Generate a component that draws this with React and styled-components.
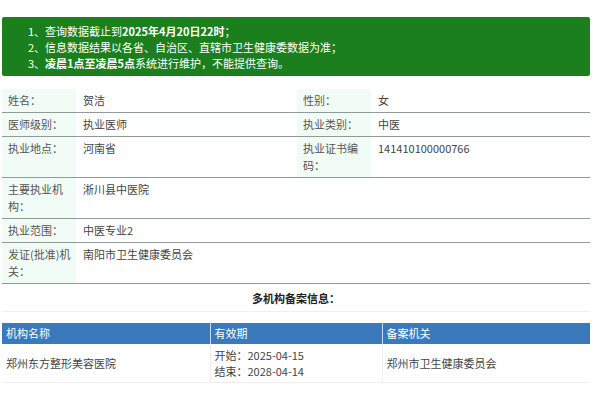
import React from "react";
import styled, { createGlobalStyle } from "styled-components";

const GlobalStyle = createGlobalStyle`
  body {
    margin: 0;
    background: #fff;
    font-family: "Noto Sans CJK SC", "Noto Sans", sans-serif;
    font-size: 11px;
    color: #333;
  }
`;

const Page = styled.div`
  width: 588px;
  margin-left: 2px;
  padding-top: 17px;
`;

const Notice = styled.ul`
  list-style: none;
  margin: 0;
  padding: 6px 0 5px 26px;
  background: #1b7f1e;
  border-radius: 2px;
  color: #fff;
  line-height: 16px;
`;

const NoticeItem = styled.li`
  b {
    font-weight: 700;
  }
`;

const Detail = styled.table`
  width: 100%;
  margin-top: 13px;
  border-collapse: collapse;
  table-layout: fixed;
`;

const Row = styled.tr`
  border-bottom: 1px solid #8e9c97;
`;

const Label = styled.td`
  background: #f2fcf6;
  color: #555;
  padding: 3px 2px 3px 6px;
  line-height: 17px;
  vertical-align: top;
`;

const Value = styled.td`
  color: #444;
  padding: 3px 7px;
  line-height: 17px;
  vertical-align: top;
`;

const SubTitle = styled.div`
  margin-top: 6px;
  padding-bottom: 5px;
  border-bottom: 1px solid #f0f0f0;
  text-align: center;
  font-weight: 700;
  color: #222;
  line-height: 16px;
`;

const Records = styled.table`
  width: 100%;
  margin-top: 11px;
  border-collapse: collapse;
  table-layout: fixed;
`;

const Head = styled.th`
  background: #3a79bb;
  color: #fff;
  font-weight: 400;
  text-align: left;
  padding: 2px 4px;
  line-height: 17px;
  border-left: ${(p) => (p.$first ? "none" : "1px solid #c9dbee")};
`;

const Cell = styled.td`
  color: #444;
  padding: 3px 4px;
  line-height: 16px;
  border-left: ${(p) => (p.$first ? "none" : "1px solid #eee")};
  border-bottom: 1px solid #eee;
`;

const details = [
  [["姓名：", "贺洁"], ["性别：", "女"]],
  [["医师级别：", "执业医师"], ["执业类别：", "中医"]],
  [["执业地点：", "河南省"], ["执业证书编码：", "141410100000766"]],
  [["主要执业机构：", "淅川县中医院"]],
  [["执业范围：", "中医专业2"]],
  [["发证(批准)机关：", "南阳市卫生健康委员会"]],
];

export default function App() {
  return (
    <Page>
      <GlobalStyle />
      <Notice>
        <NoticeItem>
          1、查询数据截止到<b>2025年4月20日22时</b>；
        </NoticeItem>
        <NoticeItem>2、信息数据结果以各省、自治区、直辖市卫生健康委数据为准；</NoticeItem>
        <NoticeItem>
          3、<b>凌晨1点至凌晨5点</b>系统进行维护，不能提供查询。
        </NoticeItem>
      </Notice>

      <Detail>
        <colgroup>
          <col style={{ width: 74 }} />
          <col style={{ width: 221 }} />
          <col style={{ width: 74 }} />
          <col />
        </colgroup>
        <tbody>
          {details.map((row, i) => (
            <Row key={i}>
              {row.map(([label, value], j) => (
                <React.Fragment key={j}>
                  <Label>{label}</Label>
                  <Value colSpan={row.length === 1 ? 3 : 1}>{value}</Value>
                </React.Fragment>
              ))}
            </Row>
          ))}
        </tbody>
      </Detail>

      <SubTitle>多机构备案信息：</SubTitle>

      <Records>
        <colgroup>
          <col style={{ width: 208 }} />
          <col style={{ width: 172 }} />
          <col />
        </colgroup>
        <thead>
          <tr>
            <Head $first>机构名称</Head>
            <Head>有效期</Head>
            <Head>备案机关</Head>
          </tr>
        </thead>
        <tbody>
          <tr>
            <Cell $first>郑州东方整形美容医院</Cell>
            <Cell>
              开始：2025-04-15
              <br />
              结束：2028-04-14
            </Cell>
            <Cell>郑州市卫生健康委员会</Cell>
          </tr>
        </tbody>
      </Records>
    </Page>
  );
}
